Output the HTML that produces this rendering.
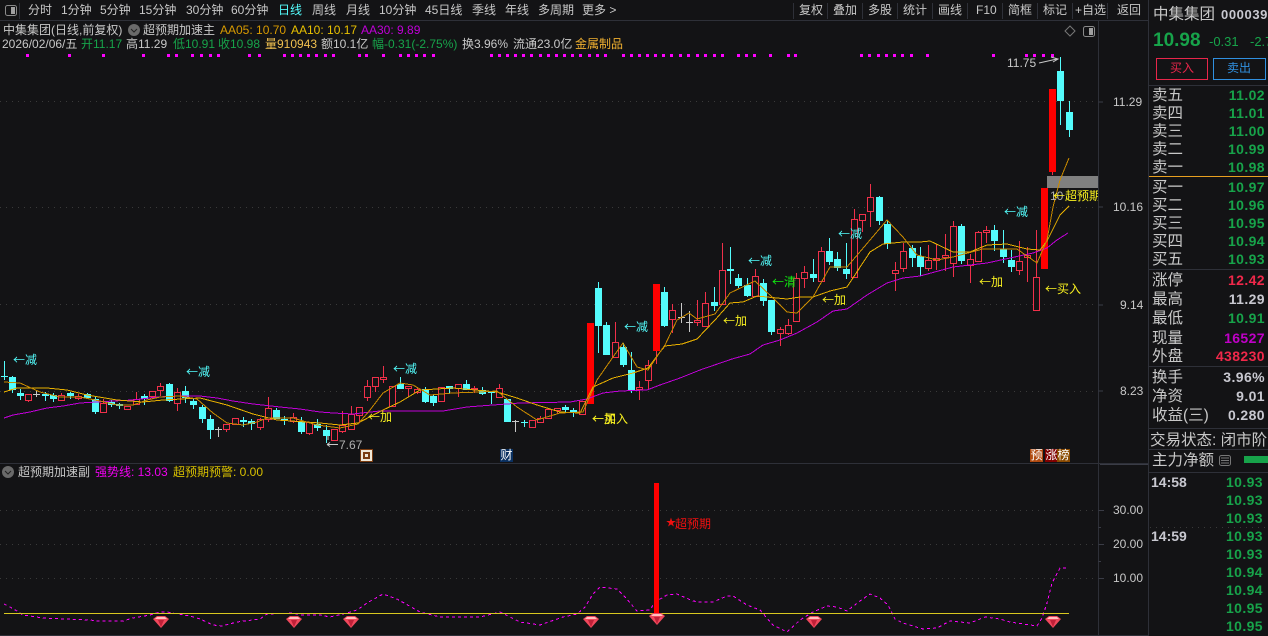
<!DOCTYPE html>
<html><head><meta charset="utf-8">
<style>
html,body{margin:0;padding:0;background:#131315;width:1268px;height:636px;overflow:hidden}
#r{position:relative;width:1268px;height:636px;overflow:hidden;background:#131315;font-family:"Liberation Sans","Noto Sans CJK SC",sans-serif;font-size:12px;color:#c8c8c8}
#r span{position:absolute;white-space:nowrap;line-height:16px}
svg{position:absolute;left:0;top:0}
.c{color:#54fcfc;font-family:"Noto Sans CJK SC",sans-serif}.y{color:#f8f020;font-family:"Noto Sans CJK SC",sans-serif}.g{color:#17a34a}.a{color:#f0b030}
.l{font-size:15.5px;left:1152px;color:#c8c8c8;margin-top:1px}
.v{font-size:14px;font-weight:bold;right:3px;color:#17a34a;letter-spacing:.4px}
.w{color:#c8c8d0}.t{right:5px;font-size:14px;font-weight:bold;color:#17a34a;letter-spacing:.4px}
.m{width:13px;height:13px;line-height:13px!important;text-align:center;color:#fff;font-size:12px}
.n{shape-rendering:crispEdges}
</style></head><body><div id="r">
<svg width="1268" height="636" viewBox="0 0 1268 636" fill="none">
<g stroke="#2e3038">
<path d="M0 20.5H1149M0 463.5H1149M1098.5 21V636M1148.5 0V636M19.5 3V19M793.5 3V19M827.5 3V19M862.5 3V19M897.5 3V19M932.5 3V19M967.5 3V19M1002.5 3V19M1037.5 3V19M1072.5 3V19M1107.5 3V19M1149 85.5H1268M1149 269.5H1268M1149 366.5H1268M1149 428.5H1268M1149 449.5H1268M1149 472.5H1268M0 635.5H1149"/>
<path d="M1100 464.5H1148M1098.5 102H1103M1098.5 207H1103M1098.5 305H1103M1098.5 391H1103M1098.5 510.5H1104M1098.5 544.5H1104M1098.5 578.5H1104M1098.5 527.5H1101M1098.5 561.5H1101" stroke="#3a3c46"/>
</g>
<g stroke="#3a3a3a" stroke-dasharray="1 5">
<path d="M0 101.5H1096M0 207.5H1096M0 304.5H1096M0 391.5H1096M0 510.5H1096M0 544.5H1096M0 578.5H1096M1150 527.5H1268"/>
</g>
<!-- top icons -->
<rect x="5.5" y="5.5" width="11" height="10" rx="2" stroke="#8a8a8a"/><rect x="11" y="7" width="4" height="7" fill="#a0a0a0"/>
<rect x="1083.5" y="26.5" width="11" height="10" rx="2" stroke="#8a8a8a"/><rect x="1089" y="28" width="4" height="7" fill="#a0a0a0"/>
<path d="M1070 26l5 5-5 5-5-5z" stroke="#777"/>
<circle cx="134" cy="30" r="6" fill="#6a6a6a"/><path d="M131 29l3 3 3-3" stroke="#222"/>
<circle cx="8" cy="472" r="6" fill="#6a6a6a"/><path d="M5 471l3 3 3-3" stroke="#222"/>
<!-- magenta dots -->
<path stroke="#ff00ff" stroke-width="3" d="M26 55.5h3M68 55.5h3M102 55.5h3M142 55.5h3M167 55.5h3M175 55.5h3M191 55.5h3M200 55.5h3M209 55.5h3M217 55.5h3M248 55.5h3M258 55.5h3M283 55.5h3M291 55.5h3M299 55.5h3M307 55.5h3M315 55.5h3M324 55.5h3M332 55.5h3M358 55.5h3M365 55.5h3M382 55.5h3M399 55.5h3M407 55.5h3M415 55.5h3M423 55.5h3M432 55.5h3M490 55.5h3M498 55.5h3M506 55.5h3M514 55.5h3M522 55.5h3M530 55.5h3M539 55.5h3M547 55.5h3M555 55.5h3M563 55.5h3M571 55.5h3M579 55.5h3M588 55.5h3M596 55.5h3M604 55.5h3M622 55.5h3M630 55.5h3M638 55.5h3M646 55.5h3M654 55.5h3M662 55.5h3M670 55.5h3M679 55.5h3M687 55.5h3M696 55.5h3M704 55.5h3M713 55.5h3M721 55.5h3M737 55.5h3M745 55.5h3M753 55.5h3M769 55.5h3M787 55.5h3M794 55.5h3M860 55.5h3M868 55.5h3M877 55.5h3M885 55.5h3M893 55.5h3M901 55.5h3M910 55.5h3M926 55.5h3M992 55.5h3M1025 55.5h3M1033 55.5h3M1042 55.5h3M1051 55.5h3"/>
<g shape-rendering="crispEdges">
<!-- cyan wicks -->
<path stroke="#54fcfc" d="M4.5 361V380M12.5 376V393M20.5 389V400M45.5 392V401M53.5 393V402M70.5 392V399M87.5 393V399M95.5 397V414M111.5 400V407M119.5 403V409M144.5 394V405M169.5 383V402M185.5 386V403M193.5 398V409M202.5 405V423M210.5 415V439M243.5 417V427M251.5 419V430M276.5 408V419M284.5 416V425M301.5 417V434M317.5 419V431M326.5 425V443M400.5 377V389M425.5 387V403M433.5 394V406M449.5 386V394M466.5 380V390M482.5 387V395M491.5 392V404M524.5 420V427M565.5 405V412M573.5 408V417M598.5 282V353M606.5 322V355M623.5 343V367M631.5 352V393M664.5 287V327M714.5 287V311M730.5 247V284M738.5 274V288M747.5 278V297M763.5 279V306M771.5 300V335M813.5 259V282M829.5 238V265M837.5 252V271M846.5 243V279M879.5 196V225M887.5 220V249M912.5 245V267M920.5 247V276M961.5 224V264M994.5 225V251M1003.5 230V263M1011.5 250V272M1060.5 57V125M1069.5 101V137"/>
<!-- white crosses -->
<path stroke="#c8c8c8" d="M36.5 391V397M33 394.5H40M218.5 427V437M215 429.5H222M515.5 420V432M512 421.5H519M681.5 303V323M678 317.5H685M689.5 311V332M686 322.5H693"/>
<!-- red wicks -->
<path stroke="#f0304a" d="M28.5 394V402M61.5 393V400M78.5 394V400M103.5 399V412M136.5 392V404M152.5 391V399M160.5 383V396M177.5 388V411M226.5 424V432M260.5 418V430M268.5 397V422M293.5 413V423M309.5 422V435M342.5 411V433M351.5 406V429M359.5 407V423M367.5 380V401M375.5 377V392M383.5 366V383M408.5 386V397M417.5 387V394M458.5 384V397M474.5 386V393M499.5 384V397M540.5 416V422M557.5 408V414M615.5 322V357M639.5 381V400M648.5 360V390M656.5 351V364M672.5 304V333M697.5 300V326M705.5 292V326M722.5 243V304M755.5 269V296M780.5 327V346M788.5 319V335M796.5 273V321M804.5 266V288M821.5 247V281M854.5 209V278M862.5 214V232M870.5 184V227M895.5 262V291M903.5 243V272M928.5 245V271M936.5 244V270M945.5 234V271M953.5 221V277M970.5 254V283M978.5 231V262M986.5 226V243M1019.5 241V275M1027.5 247V282M1036.5 230V310M1052.5 172V175"/>
<!-- red hollow bodies -->
<path stroke="#f0304a" fill="#131315" d="M25.5 394.5h6V400.5h-6zM58.5 395.5h6V400.5h-6zM75.5 396.5h6V398.5h-6zM100.5 403.5h6V412.5h-6zM124.5 406.5h6V409.5h-6zM133.5 399.5h6V404.5h-6zM149.5 391.5h6V396.5h-6zM157.5 386.5h6V390.5h-6zM174.5 392.5h6V403.5h-6zM223.5 424.5h6V429.5h-6zM232.5 418.5h6V424.5h-6zM257.5 419.5h6V427.5h-6zM265.5 408.5h6V419.5h-6zM290.5 417.5h6V421.5h-6zM306.5 422.5h6V433.5h-6zM331.5 429.5h6V440.5h-6zM339.5 425.5h6V431.5h-6zM348.5 414.5h6V429.5h-6zM356.5 407.5h6V415.5h-6zM364.5 386.5h6V397.5h-6zM372.5 377.5h6V386.5h-6zM380.5 377.5h6V379.5h-6zM389.5 386.5h6V406.5h-6zM405.5 386.5h6V388.5h-6zM414.5 389.5h6V392.5h-6zM438.5 387.5h6V401.5h-6zM455.5 384.5h6V388.5h-6zM471.5 388.5h6V389.5h-6zM496.5 388.5h6V397.5h-6zM529.5 420.5h6V427.5h-6zM537.5 418.5h6V422.5h-6zM545.5 409.5h6V418.5h-6zM554.5 408.5h6V410.5h-6zM579.5 401.5h6V414.5h-6zM612.5 342.5h6V357.5h-6zM636.5 387.5h6V389.5h-6zM645.5 365.5h6V380.5h-6zM669.5 310.5h6V319.5h-6zM694.5 320.5h6V322.5h-6zM702.5 303.5h6V326.5h-6zM719.5 270.5h6V304.5h-6zM752.5 276.5h6V296.5h-6zM777.5 329.5h6V333.5h-6zM785.5 325.5h6V333.5h-6zM793.5 278.5h6V321.5h-6zM801.5 272.5h6V278.5h-6zM818.5 251.5h6V281.5h-6zM851.5 219.5h6V277.5h-6zM859.5 214.5h6V220.5h-6zM867.5 197.5h6V211.5h-6zM892.5 270.5h6V273.5h-6zM900.5 251.5h6V268.5h-6zM925.5 260.5h6V268.5h-6zM933.5 258.5h6V260.5h-6zM942.5 255.5h6V257.5h-6zM950.5 226.5h6V263.5h-6zM967.5 259.5h6V265.5h-6zM975.5 232.5h6V261.5h-6zM983.5 230.5h6V232.5h-6zM1016.5 261.5h6V270.5h-6zM1024.5 255.5h6V257.5h-6zM1033.5 277.5h6V310.5h-6z"/>
<!-- cyan bodies -->
<path fill="#54fcfc" d="M1 376h7v1h-7zM9 377h7V390h-7zM17 393h7V396h-7zM42 394h7V396h-7zM50 395h7V399h-7zM67 393h7V396h-7zM84 394h7V398h-7zM92 399h7V412h-7zM108 402h7V405h-7zM116 404h7V406h-7zM141 396h7V399h-7zM166 384h7V401h-7zM182 391h7V398h-7zM190 401h7V405h-7zM199 407h7V419h-7zM207 419h7V430h-7zM240 420h7V422h-7zM248 421h7V424h-7zM273 410h7V419h-7zM281 419h7V420h-7zM298 421h7V432h-7zM314 424h7V428h-7zM323 430h7V436h-7zM397 384h7V389h-7zM422 389h7V402h-7zM430 396h7V403h-7zM446 386h7V389h-7zM463 384h7V390h-7zM479 390h7V394h-7zM488 392h7V393h-7zM504 399h7V422h-7zM521 422h7V423h-7zM562 407h7V410h-7zM570 410h7V413h-7zM595 288h7V326h-7zM603 325h7V355h-7zM620 347h7V365h-7zM628 370h7V390h-7zM661 292h7V326h-7zM711 302h7V306h-7zM727 269h7V271h-7zM735 278h7V286h-7zM744 285h7V296h-7zM760 283h7V301h-7zM768 300h7V332h-7zM810 274h7V278h-7zM826 251h7V262h-7zM834 259h7V268h-7zM843 269h7V274h-7zM876 197h7V221h-7zM884 224h7V244h-7zM909 248h7V258h-7zM917 256h7V267h-7zM958 226h7V261h-7zM991 230h7V241h-7zM1000 249h7V257h-7zM1008 260h7V267h-7zM1057 71h7V101h-7zM1066 112h7V130h-7z"/>
<!-- solid red -->
<path fill="#ff0000" d="M587 323h7V404h-7zM653 284h7V351h-7zM1041 188h7V269h-7zM1049 89h7V172h-7z"/>
</g>
<!-- grey band -->
<rect x="1047" y="176" width="51" height="12" fill="#808080"/>
<!-- MA lines -->
<path class="n" stroke="#c000d8" d="M4 418L13 415 30 412 47 408 63 406 80 403 97 402 113 401 133 400 157 397 180 396 200 396 217 398 233 401 253 404 280 407 300 409 320 412 333 413 353 414 380 411 443 411 467 407 493 405 520 403 570 402 587 399 603 393 620 391 647 390 660 385 680 378 700 370 732 359 750 354 763 345 780 340 797 333 817 322 833 311 847 309 867 295 887 283 903 278 920 276 953 267 987 263 1010 258 1033 253 1047 248 1057 240 1068 233"/>
<path class="n" stroke="#e8b000" d="M4 392L17 388 47 388 67 390 87 395 117 400 143 402 163 400 200 398 227 405 253 414 277 420 320 423 340 425 358 423 383 410 400 402 420 390 453 388 497 392 517 398 537 405 560 412 580 413 593 387 613 378 633 373 648 368 660 352 665 346 682 344 697 339 715 320 730 303 743 302 757 296 787 299 800 297 813 297 830 291 847 287 870 252 883 244 903 242 920 242 930 241 953 252 970 252 987 245 1007 244 1027 249 1040 250 1047 241 1060 215 1069 206"/>
<path class="n" stroke="#c88a00" d="M4 382L20 383 40 392 60 397 80 397 100 401 117 405 133 405 147 400 160 397 180 396 197 399 213 413 227 423 243 425 257 422 267 418 293 418 317 425 340 428 358 424 370 410 383 393 400 383 413 385 430 395 453 393 480 392 497 391 517 407 537 420 560 413 583 412 597 380 613 357 623 343 637 367 648 370 660 352 665 345 677 320 689 313 697 319 715 314 730 293 755 281 773 298 787 312 797 313 813 297 830 267 847 267 870 240 887 220 903 237 917 255 937 260 953 257 983 249 1017 249 1037 263 1047 240 1053 207 1060 180 1069 158"/>
<path stroke="#c8c8c8" d="M1039 63L1057 59M1051 57L1058 59 1053 62"/>
<path stroke="#c8c8c8" d="M328 436V440M327 444.5H338M327 444.5l3-2M327 444.5l3 2"/>
<!-- strength curve -->
<path class="n" stroke="#ff00ff" stroke-dasharray="3 3" d="M4 604L10 607 17 611 23 615 43 618 67 619 90 620 97 621 123 621 133 618 150 615 160 612 167 612 190 616 200 619 213 625 222 626 237 622 260 619 267 614 293 613 300 615 320 615 330 617 347 613 357 610 367 603 383 594 397 599 420 612 440 617 480 617 500 612 520 622 540 625 563 617 577 614 585 607 593 594 600 587 617 589 625 597 637 611 650 610 655 602 667 595 677 594 693 601 700 602 713 602 727 596 733 596 747 605 760 610 773 625 787 632 800 620 813 612 827 606 837 607 847 611 860 601 870 594 880 598 888 605 895 619 903 623 923 629 937 628 950 621 970 623 985 617 1000 619 1010 622 1037 626 1042 618 1047 603 1052 583 1060 568 1068 568"/>
<path stroke="#d8c820" d="M4 613.5H1069"/>
<rect x="654" y="483" width="5" height="131" fill="#ff0000"/>
<defs><g id="d"><path fill="#f0485c" d="M-8 3L-4 0H4L8 3 0 12z"/><path fill="#ffc0c0" d="M-6 3L-4 1H4L6 3z"/><path fill="#c02038" d="M-3 4L0 11 3 4z"/></g></defs>
<use href="#d" x="161" y="616"/><use href="#d" x="294" y="616"/><use href="#d" x="351" y="616"/><use href="#d" x="591" y="616"/><use href="#d" x="657" y="613"/><use href="#d" x="814" y="616"/><use href="#d" x="1053" y="616"/>
<!-- main-force icon -->
<rect x="1219.5" y="455.5" width="11" height="10" rx="2" stroke="#777"/><path d="M1221 458h8M1221 460.5h8M1221 463h8" stroke="#777"/>
<rect x="1244" y="456" width="24" height="7" fill="#17a34a"/>
<path d="M1149 176.5H1268" stroke="#e8a020"/>
<rect x="1156.5" y="58.5" width="51" height="21" stroke="#e8264a"/>
<rect x="1213.5" y="58.5" width="52" height="21" stroke="#3090e0"/>
<rect x="360" y="449" width="13" height="13" fill="#7a3c10"/><rect x="361" y="450" width="11" height="11" fill="#f0e8d8"/><rect x="363" y="452" width="7" height="7" fill="#7a3c10"/><rect x="365" y="454" width="3" height="3" fill="#f0e8d8"/>
</svg>

<span style="left:28px;top:2px">分时</span><span style="left:61px;top:2px">1分钟</span><span style="left:100px;top:2px">5分钟</span><span style="left:139px;top:2px">15分钟</span><span style="left:186px;top:2px">30分钟</span><span style="left:231px;top:2px">60分钟</span><span style="left:278px;top:2px;color:#54fcfc">日线</span><span style="left:312px;top:2px">周线</span><span style="left:346px;top:2px">月线</span><span style="left:379px;top:2px">10分钟</span><span style="left:425px;top:2px">45日线</span><span style="left:472px;top:2px">季线</span><span style="left:505px;top:2px">年线</span><span style="left:538px;top:2px">多周期</span><span style="left:582px;top:2px">更多 &gt;</span>
<span style="left:799px;top:2px">复权</span><span style="left:833px;top:2px">叠加</span><span style="left:868px;top:2px">多股</span><span style="left:903px;top:2px">统计</span><span style="left:938px;top:2px">画线</span><span style="left:976px;top:2px">F10</span><span style="left:1008px;top:2px">简框</span><span style="left:1043px;top:2px">标记</span><span style="left:1075px;top:2px">+自选</span><span style="left:1117px;top:2px">返回</span>

<span style="left:3px;top:22px">中集集团(日线,前复权)</span><span style="left:143px;top:22px">超预期加速主</span><span style="left:220px;top:22px;color:#d89a00">AA05: 10.70</span><span style="left:291px;top:22px;color:#e8c000">AA10: 10.17</span><span style="left:361px;top:22px;color:#c000d8">AA30: 9.89</span>
<span style="left:2px;top:36px">2026/02/06/五</span><span class="g" style="left:81px;top:36px">开11.17</span><span style="left:126px;top:36px">高11.29</span><span class="g" style="left:173px;top:36px">低10.91</span><span class="g" style="left:218px;top:36px">收10.98</span><span style="left:265px;top:36px;color:#f0c050">量910943</span><span style="left:321px;top:36px">额10.1亿</span><span class="g" style="left:372px;top:36px">幅-0.31(-2.75%)</span><span style="left:462px;top:36px">换3.96%</span><span style="left:513px;top:36px">流通23.0亿</span><span class="a" style="left:575px;top:36px">金属制品</span>

<span class="c" style="left:13px;top:352px">←减</span><span class="c" style="left:186px;top:364px">←减</span><span class="c" style="left:393px;top:361px">←减</span><span class="y" style="left:368px;top:409px">←加</span><span style="left:327px;top:437px;padding-left:12px;color:#b0b0b0">7.67</span><span class="y" style="left:592px;top:411px">←买入</span><span class="y" style="left:592px;top:411px">←加</span><span class="c" style="left:624px;top:319px">←减</span><span class="y" style="left:723px;top:313px">←加</span><span class="c" style="left:748px;top:253px">←减</span><span style="left:772px;top:274px;color:#10f010;font-family:'Noto Sans CJK SC',sans-serif">←清</span><span class="y" style="left:822px;top:292px">←加</span><span class="c" style="left:838px;top:226px">←减</span><span class="c" style="left:1004px;top:204px">←减</span><span class="y" style="left:979px;top:274px">←加</span><span class="y" style="left:1045px;top:281px">←买入</span>
<span style="left:1007px;top:55px;color:#c8c8c8">11.75</span>
<span style="left:1050px;top:188px;color:#b0b0b0">10</span><span class="y" style="left:1053px;top:188px;width:45px;overflow:hidden">←超预期</span>
<span style="left:1113px;top:94px;color:#c8c8c8">11.29</span><span style="left:1113px;top:199px;color:#c8c8c8">10.16</span><span style="left:1120px;top:297px;color:#c8c8c8">9.14</span><span style="left:1120px;top:383px;color:#c8c8c8">8.23</span>
<span class="m" style="left:500px;top:449px;background:#0a3060">财</span><span class="m" style="left:1030px;top:449px;background:#b04a10">预</span><span class="m" style="left:1045px;top:449px;background:#800000">涨</span><span class="m" style="left:1057px;top:449px;background:#8a4a00">榜</span>

<span style="left:18px;top:464px">超预期加速副</span><span style="left:95px;top:464px;color:#f000f0">强势线: 13.03</span><span style="left:173px;top:464px;color:#d8c000">超预期预警: 0.00</span>
<span style="left:666px;top:516px;color:#f01010;font-size:10px">★</span><span style="left:675px;top:516px;color:#f01010">超预期</span>
<span style="left:1113px;top:502px">30.00</span><span style="left:1113px;top:536px">20.00</span><span style="left:1113px;top:570px">10.00</span>

<span style="left:1153px;top:7px;font-size:15.5px">中集集团</span><span class="w" style="left:1221px;top:7px;font-size:13px;font-weight:bold;letter-spacing:.6px">000039</span>
<span class="g" style="left:1153px;top:33px;font-size:19px;font-weight:bold">10.98</span><span class="g" style="left:1209px;top:34px;font-size:13px">-0.31</span><span class="g" style="left:1250px;top:34px;font-size:13px">-2.7</span>
<span style="left:1170px;top:60px;color:#e8264a">买入</span><span style="left:1227px;top:60px;color:#3090e0">卖出</span>

<span class="l" style="top:87px">卖五</span><span class="v" style="top:87px">11.02</span>
<span class="l" style="top:105px">卖四</span><span class="v" style="top:105px">11.01</span>
<span class="l" style="top:123px">卖三</span><span class="v" style="top:123px">11.00</span>
<span class="l" style="top:141px">卖二</span><span class="v" style="top:141px">10.99</span>
<span class="l" style="top:159px">卖一</span><span class="v" style="top:159px">10.98</span>
<span class="l" style="top:179px">买一</span><span class="v" style="top:179px">10.97</span>
<span class="l" style="top:197px">买二</span><span class="v" style="top:197px">10.96</span>
<span class="l" style="top:215px">买三</span><span class="v" style="top:215px">10.95</span>
<span class="l" style="top:233px">买四</span><span class="v" style="top:233px">10.94</span>
<span class="l" style="top:251px">买五</span><span class="v" style="top:251px">10.93</span>
<span class="l" style="top:272px">涨停</span><span class="v" style="top:272px;color:#f0284a">12.42</span>
<span class="l" style="top:291px">最高</span><span class="v w" style="top:291px;color:#c8c8d0">11.29</span>
<span class="l" style="top:310px">最低</span><span class="v" style="top:310px">10.91</span>
<span class="l" style="top:330px">现量</span><span class="v" style="top:330px;color:#c000c8">16527</span>
<span class="l" style="top:348px">外盘</span><span class="v" style="top:348px;color:#f0284a">438230</span>
<span class="l" style="top:369px">换手</span><span class="v" style="top:369px;color:#c8c8d0">3.96%</span>
<span class="l" style="top:388px">净资</span><span class="v" style="top:388px;color:#c8c8d0">9.01</span>
<span class="l" style="top:407px">收益(三)</span><span class="v" style="top:407px;color:#c8c8d0">0.280</span>
<span class="l" style="top:432px;left:1150px">交易状态: 闭市阶</span>
<span class="l" style="top:452px">主力净额</span>

<span class="w" style="left:1151px;top:474px;font-size:14px;font-weight:bold">14:58</span><span class="t" style="top:474px">10.93</span><span class="t" style="top:492px">10.93</span><span class="t" style="top:510px">10.93</span>
<span class="w" style="left:1151px;top:528px;font-size:14px;font-weight:bold">14:59</span><span class="t" style="top:528px">10.93</span><span class="t" style="top:546px">10.93</span><span class="t" style="top:564px">10.94</span><span class="t" style="top:582px">10.94</span><span class="t" style="top:600px">10.95</span><span class="t" style="top:618px">10.95</span>
</div></body></html>
